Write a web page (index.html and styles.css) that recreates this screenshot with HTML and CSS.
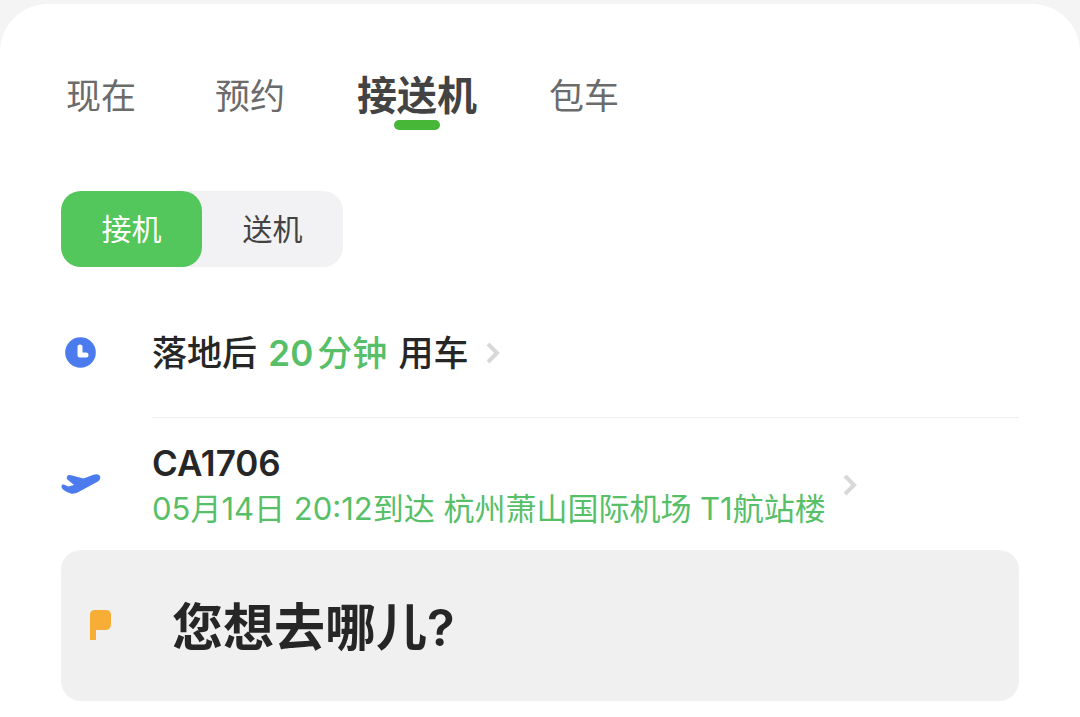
FILE: index.html
```
<!DOCTYPE html>
<html lang="zh-CN">
<head>
	<meta charset="utf-8">
	<meta name="viewport" content="width=device-width, initial-scale=1">
	<title>接送机</title>
	<link rel="stylesheet" href="styles.css">
</head>
<body>
	<main class="card">
		<nav class="tabs">
			<button type="button" class="tab tab-now">现在</button>
			<button type="button" class="tab">预约</button>
			<button type="button" class="tab active">接送机</button>
			<button type="button" class="tab">包车</button>
		</nav>

		<div class="switch">
			<button type="button" class="switch-btn active">接机</button>
			<button type="button" class="switch-btn">送机</button>
		</div>

		<button type="button" class="row row-time">
			<svg class="icon" viewBox="0 0 40 40" aria-hidden="true">
				<circle cx="19.500" cy="19.500" r="15.300" fill="#4b7bec"/>
				<path d="M19 14v8h6" fill="none" stroke="#fff" stroke-width="5" stroke-linecap="round" stroke-linejoin="round"/>
			</svg>
			<span class="row-body">
				<span class="title">落地后 <span class="green"><span class="num">20</span>分钟</span> 用车</span>
				<svg class="arrow" viewBox="0 0 16 24" aria-hidden="true">
					<path d="M3 3l9 9-9 9" fill="none" stroke="#d8d8d8" stroke-width="4"/>
				</svg>
			</span>
		</button>

		<button type="button" class="row row-flight">
			<svg class="icon" viewBox="0 0 40 40" aria-hidden="true">
				<path d="M.5 21.500C.5 19.500 2.500 19 4.500 20.200l3 1.300 5.500-1.500-6-5C4.800 13 6 10.500 8 10c1-.200 2 0 3 .400L22.500 13.500 32.500 9.800c3.500-1.400 6-.500 6.700 1.700.600 2.200-.700 4.200-3.200 5.500L17.500 27c-3.500 1.900-7 2.200-9.500.800C4 26 .5 24.500.5 21.500z" fill="#4b7bec"/>
			</svg>
			<span class="row-body">
				<span class="flight">
					<span class="title flight-no">CA1706</span>
					<span class="detail">05月14日 20:12到达 杭州萧山国际机场 T1航站楼</span>
				</span>
				<svg class="arrow" viewBox="0 0 16 24" aria-hidden="true">
					<path d="M3 3l9 9-9 9" fill="none" stroke="#d8d8d8" stroke-width="4"/>
				</svg>
			</span>
		</button>

		<button type="button" class="search">
			<svg class="icon" viewBox="0 0 40 40" aria-hidden="true">
				<path d="M9 36V11q0-5 5-5h11q5 0 5 5v9q0 6-6 6h-9v10z" fill="#f7ae36"/>
			</svg>
			<span>您想去哪儿?</span>
		</button>
	</main>
</body>
</html>
```
FILE: styles.css
```
*{
	margin: 0;
	padding: 0;
	box-sizing: border-box;
}
body{
	background: #f4f4f4;
	padding-top: 4px;
	font-family: Inter, "Noto Sans CJK SC", sans-serif;
	color: #262626;
}
button{
	border: none;
	background: none;
	font: inherit;
	color: inherit;
	text-align: left;
	cursor: pointer;
}
.card{
	background: #fff;
	border-radius: 48px 48px 0 0;
	min-height: calc(100vh - 4px);
	padding: 60px 61px 16px;
}
.tabs{
	display: flex;
	align-items: center;
	gap: 72px;
	height: 64px;
	padding-left: 5px;
}
.tab{
	position: relative;
	font-size: 35px;
	line-height: 56px;
	color: #6b6b6b;
}
.tab-now{
	margin-right: 7px;
}
.tab.active{
	font-size: 40px;
	font-weight: 600;
	color: #434343;
}
.tab.active:after{
	content: "";
	position: absolute;
	left: 50%;
	bottom: -6px;
	width: 46px;
	height: 10px;
	border-radius: 5px;
	background: #47b737;
	transform: translateX(-50%);
}
.switch{
	display: inline-flex;
	margin-top: 63px;
	border-radius: 20px;
	background: #f2f2f4;
}
.switch-btn{
	width: 141px;
	height: 76px;
	padding-bottom: 4px;
	border-radius: 20px;
	font-size: 30px;
	text-align: center;
	color: #434343;
}
.switch-btn.active{
	background: #53c65c;
	color: #fff;
}
.row{
	display: flex;
	align-items: center;
	width: 100%;
}
.icon{
	flex: none;
	width: 40px;
	height: 40px;
}
.row-body{
	display: flex;
	align-items: center;
	flex: 1;
	gap: 16px;
	margin-left: 51px;
}
.row-time{
	margin-top: 20px;
}
.row-time .row-body{
	height: 131px;
	padding-top: 2px;
	border-bottom: 1px solid #efefef;
}
.row-flight{
	height: 132px;
	padding-top: 2px;
}
.title{
	font-size: 35px;
	line-height: 48px;
	font-weight: 500;
}
.flight-no{
	font-weight: 600;
}
.green{
	margin: 0 2px;
	color: #57bf68;
}
.num{
	margin-right: 4px;
	font-weight: 600;
}
.arrow{
	flex: none;
	width: 16px;
	height: 24px;
}
.flight{
	display: flex;
	flex-direction: column;
}
.detail{
	font-size: 31px;
	line-height: 44px;
	color: #57bf68;
}
.search{
	display: flex;
	align-items: center;
	gap: 51px;
	width: 100%;
	height: 151px;
	padding: 0 20px 4px;
	border-radius: 20px;
	background: #f0f0f0;
	font-size: 51px;
	font-weight: 600;
}
```
